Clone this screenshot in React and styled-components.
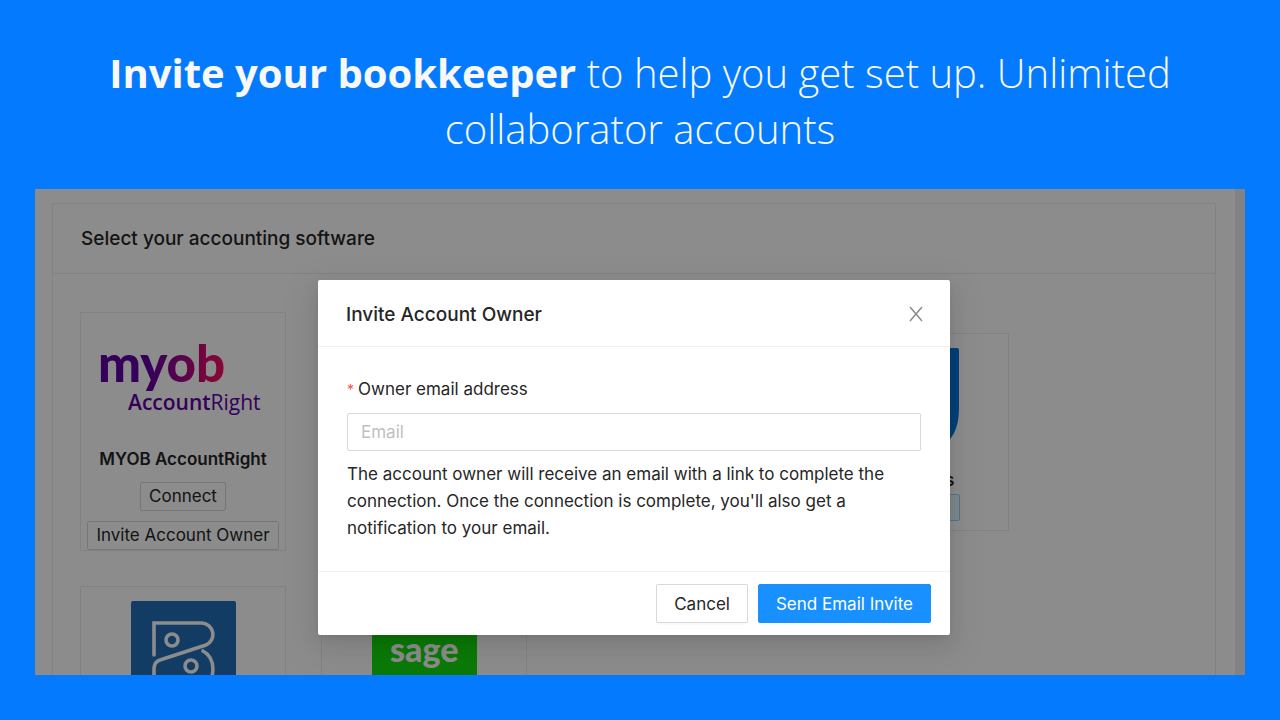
import styled, { createGlobalStyle } from "styled-components";

const App = () => {
  return (
    <Page>
      <GlobalStyle />
      <Headline>
        <strong>Invite your bookkeeper</strong> to help you get set up. Unlimited
        collaborator accounts
      </Headline>
      <Frame>
        <Content>
          <Panel>
            <PanelHeader>Select your accounting software</PanelHeader>
            <SoftwareGrid>
              <SoftwareCard>
                <MyobLogo />
                <CardName>MYOB AccountRight</CardName>
                <SmallButton type="button">Connect</SmallButton>
                <SmallButton type="button">Invite Account Owner</SmallButton>
              </SoftwareCard>
              <SoftwareCard $column={4}>
                <FreshBooksLogo />
                <CardName $compact>FreshBooks</CardName>
                <StatusTag />
              </SoftwareCard>
              <SoftwareCard $column={1}>
                <ZohoBooksLogo />
              </SoftwareCard>
              <SoftwareCard>
                <SageLogo />
              </SoftwareCard>
            </SoftwareGrid>
          </Panel>
        </Content>
        <Scrollbar />
        <Mask>
          <InviteDialog />
        </Mask>
      </Frame>
    </Page>
  );
};

const InviteDialog = () => (
  <Dialog role="dialog" aria-labelledby="invite-title">
    <DialogHeader>
      <h2 id="invite-title">Invite Account Owner</h2>
      <CloseButton type="button" aria-label="Close">
        <svg width="14" height="16" viewBox="0 0 14 16">
          <path
            d="M1 1 13 15M13 1 1 15"
            fill="none"
            stroke="currentColor"
            strokeWidth="1.5"
          />
        </svg>
      </CloseButton>
    </DialogHeader>
    <DialogBody>
      <Label htmlFor="owner-email">
        <span>*</span>Owner email address
      </Label>
      <EmailInput id="owner-email" type="email" placeholder="Email" />
      <p>
        The account owner will receive an email with a link to complete the
        connection. Once the connection is complete, you'll also get a
        notification to your email.
      </p>
    </DialogBody>
    <DialogFooter>
      <Button type="button">Cancel</Button>
      <Button type="button" $primary>
        Send Email Invite
      </Button>
    </DialogFooter>
  </Dialog>
);

const MyobLogo = () => (
  <svg width="176" height="104" viewBox="0 0 176 104" role="img" aria-label="MYOB AccountRight">
    <defs>
      <linearGradient id="myob" x1="0" x2="1">
        <stop offset="0.4" stopColor="#6100a5" />
        <stop offset="0.95" stopColor="#ee0d67" />
      </linearGradient>
    </defs>
    <text x="3" y="55" fontFamily="Lato, sans-serif" fontWeight="900" fontSize="51" fill="url(#myob)">
      myob
    </text>
    <text x="33" y="83" fontFamily="Open Sans, sans-serif" fontSize="21" fill="#6100a5">
      <tspan fontWeight="600">Account</tspan>
      <tspan fontWeight="400">Right</tspan>
    </text>
  </svg>
);

const FreshBooksLogo = () => (
  <svg width="105" height="105" viewBox="0 0 105 105" role="img" aria-label="FreshBooks">
    <path d="M0 2Q0 0 2 0H103Q105 0 105 2V60Q105 105 60 105H0Z" fill="#0075dd" />
  </svg>
);

const ZohoBooksLogo = () => (
  <svg width="105" height="105" viewBox="0 0 105 105" role="img" aria-label="Zoho Books">
    <rect width="105" height="105" rx="2" fill="#226db4" />
    <g fill="none" stroke="#fff" strokeWidth="3.6" strokeLinecap="round">
      <path d="M23 54V22H71A11.5 11.5 0 0 1 75 44L29 59Q23 61 23 68V94H68" />
      <path d="M72 50C85 57 86 78 70 94" />
      <circle cx="41" cy="39" r="6" />
      <circle cx="60" cy="65" r="6" />
    </g>
  </svg>
);

const SageLogo = () => (
  <svg width="105" height="105" viewBox="0 0 105 105" role="img" aria-label="Sage">
    <rect width="105" height="105" fill="#14dc0e" />
    <text x="18" y="61" fontFamily="Lato, sans-serif" fontWeight="900" fontSize="34" fill="#fff">
      sage
    </text>
  </svg>
);

export default App;

const GlobalStyle = createGlobalStyle`
  * {
    box-sizing: border-box;
  }

  body {
    margin: 0;
    background: #047bff;
    font-family: Inter, "Liberation Sans", sans-serif;
    font-size: 17px;
    color: #262626;
  }

  h1, h2, p {
    margin: 0;
  }

  button, input {
    font: inherit;
  }
`;

const Page = styled.main`
  display: flex;
  flex-direction: column;
  height: 100vh;
  padding: 45px 35px;
`;

const Headline = styled.h1`
  padding: 0 60px 32px;
  font-family: "Open Sans", sans-serif;
  font-size: 40px;
  font-weight: 300;
  line-height: 56px;
  text-align: center;
  color: #f8f8f8;

  strong {
    font-weight: 700;
  }
`;

const Frame = styled.section`
  position: relative;
  display: flex;
  flex: 1;
  min-height: 0;
  overflow: hidden;
  background: #fff;
`;

const Content = styled.div`
  flex: 1;
  padding: 14px 19px 0 17px;
`;

const Scrollbar = styled.div`
  width: 10px;
  background: #ededed;
`;

const Panel = styled.div`
  border: 1px solid #ededed;
  border-radius: 2px;
`;

const PanelHeader = styled.h2`
  padding: 20px 28px;
  border-bottom: 1px solid #ededed;
  font-size: 19px;
  font-weight: 500;
  line-height: 29px;
`;

const SoftwareGrid = styled.div`
  display: grid;
  grid-template-columns: repeat(auto-fill, 206px);
  align-items: center;
  gap: 35px;
  padding: 38px 27px;
`;

const SoftwareCard = styled.article`
  display: flex;
  flex-direction: column;
  align-items: center;
  grid-column-start: ${({ $column }) => $column || "auto"};
  padding-top: 14px;
  border: 1px solid #ededed;
`;

const CardName = styled.h3`
  margin: ${({ $compact }) => ($compact ? "14px 0 0" : "15px 0 9px")};
  font-size: 17px;
  font-weight: 600;
  line-height: 27px;
`;

const SmallButton = styled.button`
  height: 29px;
  padding: 0 8px;
  border: 1px solid #d9d9d9;
  border-radius: 2px;
  background: #fff;
  color: inherit;
  line-height: 27px;

  & + & {
    margin-top: 10px;
  }
`;

const StatusTag = styled.div`
  width: 108px;
  height: 27px;
  margin-bottom: 9px;
  border: 1px solid #91d5ff;
  border-radius: 2px;
  background: #e6f7ff;
`;

const Mask = styled.div`
  position: absolute;
  inset: 0;
  display: flex;
  justify-content: center;
  align-items: flex-start;
  padding: 91px 12px 0 0;
  background: rgba(0, 0, 0, 0.45);
`;

const Dialog = styled.div`
  width: 632px;
  border-radius: 2px;
  background: #fff;
  box-shadow: 0 4px 8px -4px rgba(0, 0, 0, 0.12),
    0 8px 20px rgba(0, 0, 0, 0.08), 0 10px 34px 10px rgba(0, 0, 0, 0.05);
`;

const DialogHeader = styled.header`
  display: flex;
  justify-content: space-between;
  align-items: center;
  height: 67px;
  padding: 2px 27px 0 28px;
  border-bottom: 1px solid #f0f0f0;

  h2 {
    font-size: 19px;
    font-weight: 500;
  }
`;

const CloseButton = styled.button`
  display: flex;
  padding: 0;
  border: 0;
  background: none;
  color: #8c8c8c;
`;

const DialogBody = styled.div`
  padding: 29px;

  p {
    margin-top: 10px;
    line-height: 27px;
  }
`;

const Label = styled.label`
  display: block;
  margin-bottom: 10px;
  line-height: 27px;

  span {
    margin-right: 4px;
    color: #ff4d4f;
    font-size: 14px;
  }
`;

const EmailInput = styled.input`
  display: block;
  width: 100%;
  height: 38px;
  padding: 0 13px;
  border: 1px solid #d9d9d9;
  border-radius: 2px;

  &::placeholder {
    color: #bfbfbf;
  }
`;

const DialogFooter = styled.footer`
  display: flex;
  justify-content: flex-end;
  gap: 10px;
  padding: 12px 19px;
  border-top: 1px solid #f0f0f0;
`;

const Button = styled.button`
  height: 39px;
  padding: 0 17px;
  border: 1px solid ${({ $primary }) => ($primary ? "#1890ff" : "#d9d9d9")};
  border-radius: 2px;
  background: ${({ $primary }) => ($primary ? "#1890ff" : "#fff")};
  box-shadow: 0 2px 0 rgba(0, 0, 0, 0.02);
  color: ${({ $primary }) => ($primary ? "#fff" : "#262626")};
`;
